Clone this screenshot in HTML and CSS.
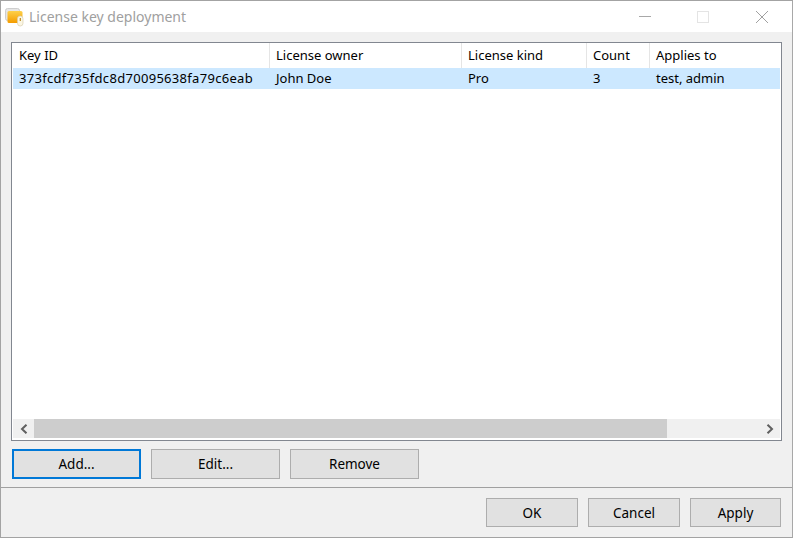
FILE: index.html
```html
<!doctype html>
<html lang="en">
  <head>
    <meta charset="UTF-8" />
    <title>License key deployment</title>
    <link rel="stylesheet" href="styles.css">
  </head>
  <body>
    <div class="window">
      <div class="title-bar">
        <svg class="app-icon" width="20" height="20" viewBox="0 0 20 20">
          <defs>
            <linearGradient id="iconFill" x1="0" y1="0" x2="0" y2="1">
              <stop offset="0" stop-color="#fdd04a" />
              <stop offset="1" stop-color="#f49c00" />
            </linearGradient>
          </defs>
          <rect x="0.5" y="1.5" width="14" height="12" rx="2" fill="#e6e6e6" stroke="#c4c4c4" stroke-width="0.8" />
          <rect x="2.5" y="4" width="15" height="12" rx="1.5" fill="url(#iconFill)" />
          <rect x="12.5" y="9" width="5.5" height="10" rx="2.7" fill="#fbf6e4" stroke="#d8cfb0" stroke-width="0.7" />
          <rect x="14.7" y="11" width="1.2" height="3" fill="#b88a1c" />
        </svg>
        <span class="title-text">License key deployment</span>
        <div class="win-controls">
          <svg width="14" height="14" viewBox="0 0 14 14" class="win-min"><path d="M1 6.5h12" stroke="#a8a8a8" stroke-width="1" /></svg>
          <svg width="14" height="14" viewBox="0 0 14 14" class="win-max"><rect x="1.5" y="1.5" width="11" height="11" fill="none" stroke="#e4e4e4" /></svg>
          <svg width="14" height="14" viewBox="0 0 14 14" class="win-close"><path d="M1 1l12 12M13 1L1 13" stroke="#a0a0a0" stroke-width="1" /></svg>
        </div>
      </div>

      <div class="content">
        <div class="list-frame">
          <div class="list-row list-head">
            <div class="col col-id">Key ID</div>
            <div class="col col-owner">License owner</div>
            <div class="col col-kind">License kind</div>
            <div class="col col-count">Count</div>
            <div class="col col-applies">Applies to</div>
          </div>
          <div class="list-row list-selected">
            <div class="col col-id key-hash">373fcdf735fdc8d70095638fa79c6eab</div>
            <div class="col col-owner">John Doe</div>
            <div class="col col-kind">Pro</div>
            <div class="col col-count">3</div>
            <div class="col col-applies">test, admin</div>
          </div>
          <div class="list-empty"></div>
          <div class="h-scroll">
            <div class="scroll-btn">
              <svg width="10" height="10" viewBox="0 0 10 10"><path d="M7.5 0.7L3 5l4.5 4.3" fill="none" stroke="#606060" stroke-width="2" /></svg>
            </div>
            <div class="scroll-thumb"></div>
            <div class="scroll-rest"></div>
            <div class="scroll-btn">
              <svg width="10" height="10" viewBox="0 0 10 10"><path d="M2.5 0.7L7 5 2.5 9.3" fill="none" stroke="#606060" stroke-width="2" /></svg>
            </div>
          </div>
        </div>

        <div class="list-actions">
          <button class="btn btn-wide btn-focus">Add...</button>
          <button class="btn btn-wide">Edit...</button>
          <button class="btn btn-wide">Remove</button>
        </div>
      </div>

      <div class="footer">
        <button class="btn btn-dialog">OK</button>
        <button class="btn btn-dialog">Cancel</button>
        <button class="btn btn-dialog btn-apply">Apply</button>
      </div>
    </div>
  </body>
</html>
```

FILE: styles.css
```css
* {
  margin: 0;
  padding: 0;
  box-sizing: border-box;
}

html,
body {
  width: 793px;
  height: 538px;
  overflow: hidden;
}

body {
  font-family: 'Noto Sans', 'Open Sans', sans-serif;
  font-size: 13px;
  color: #000;
  background: #f0f0f0;
}

.window {
  display: flex;
  flex-direction: column;
  height: 538px;
  border: 1px solid #a3a3a3;
  border-right-color: #a8a8a8;
  background: #f0f0f0;
}

/* Title bar */
.title-bar {
  display: flex;
  align-items: center;
  height: 31px;
  padding-left: 4px;
  background: #fff;
  flex-shrink: 0;
}

.app-icon {
  margin-right: 4px;
}

.title-text {
  color: #a0a0a0;
  font-size: 14px;
}

.win-controls {
  display: flex;
  align-items: center;
  margin-left: auto;
  padding-right: 23px;
  gap: 44px;
}

.win-close {
  margin-left: 1px;
}

/* Content */
.content {
  display: flex;
  flex-direction: column;
  flex: 1;
  padding: 10px 10px 0 10px;
}

.list-frame {
  display: flex;
  flex-direction: column;
  height: 399px;
  padding: 0 1px 2px 1px;
  border: 1px solid #828790;
  background: #fff;
}

.list-row {
  display: flex;
  flex-shrink: 0;
}

.list-head {
  height: 25px;
  line-height: 25px;
}

.list-head .col {
  border-right: 1px solid #e5e5e5;
}

.list-head .col-applies {
  border-right: none;
}

.list-selected {
  height: 21px;
  line-height: 21px;
  background: #cce8ff;
}

.col {
  padding-left: 6px;
  white-space: nowrap;
  overflow: hidden;
}

.col-id {
  width: 257px;
}

.key-hash {
  letter-spacing: 0.3px;
}

.col-owner {
  width: 192px;
}

.col-kind {
  width: 125px;
}

.col-count {
  width: 63px;
}

.col-applies {
  flex: 1;
}

.list-empty {
  flex: 1;
}

/* Scrollbar */
.h-scroll {
  display: flex;
  height: 19px;
  background: #f0f0f0;
  flex-shrink: 0;
}

.scroll-btn {
  display: flex;
  align-items: center;
  justify-content: center;
  width: 21px;
  flex-shrink: 0;
}

.scroll-thumb {
  width: 633px;
  background: #cdcdcd;
}

.scroll-rest {
  flex: 1;
}

/* Buttons */
.btn {
  height: 30px;
  font-family: inherit;
  font-size: 13.5px;
  color: #000;
  background: #e1e1e1;
  border: 1px solid #adadad;
}

.btn-wide {
  width: 129px;
}

.btn-focus {
  border: 2px solid #0078d7;
}

.btn-dialog {
  width: 92px;
  height: 29px;
}

.btn-apply {
  width: 91px;
}

.list-actions {
  display: flex;
  gap: 10px;
  margin-top: 8px;
  padding-left: 1px;
}

.footer {
  display: flex;
  justify-content: flex-end;
  gap: 10px;
  height: 50px;
  padding: 10px 11px 0 0;
  border-top: 1px solid #a0a0a0;
  flex-shrink: 0;
}
```
